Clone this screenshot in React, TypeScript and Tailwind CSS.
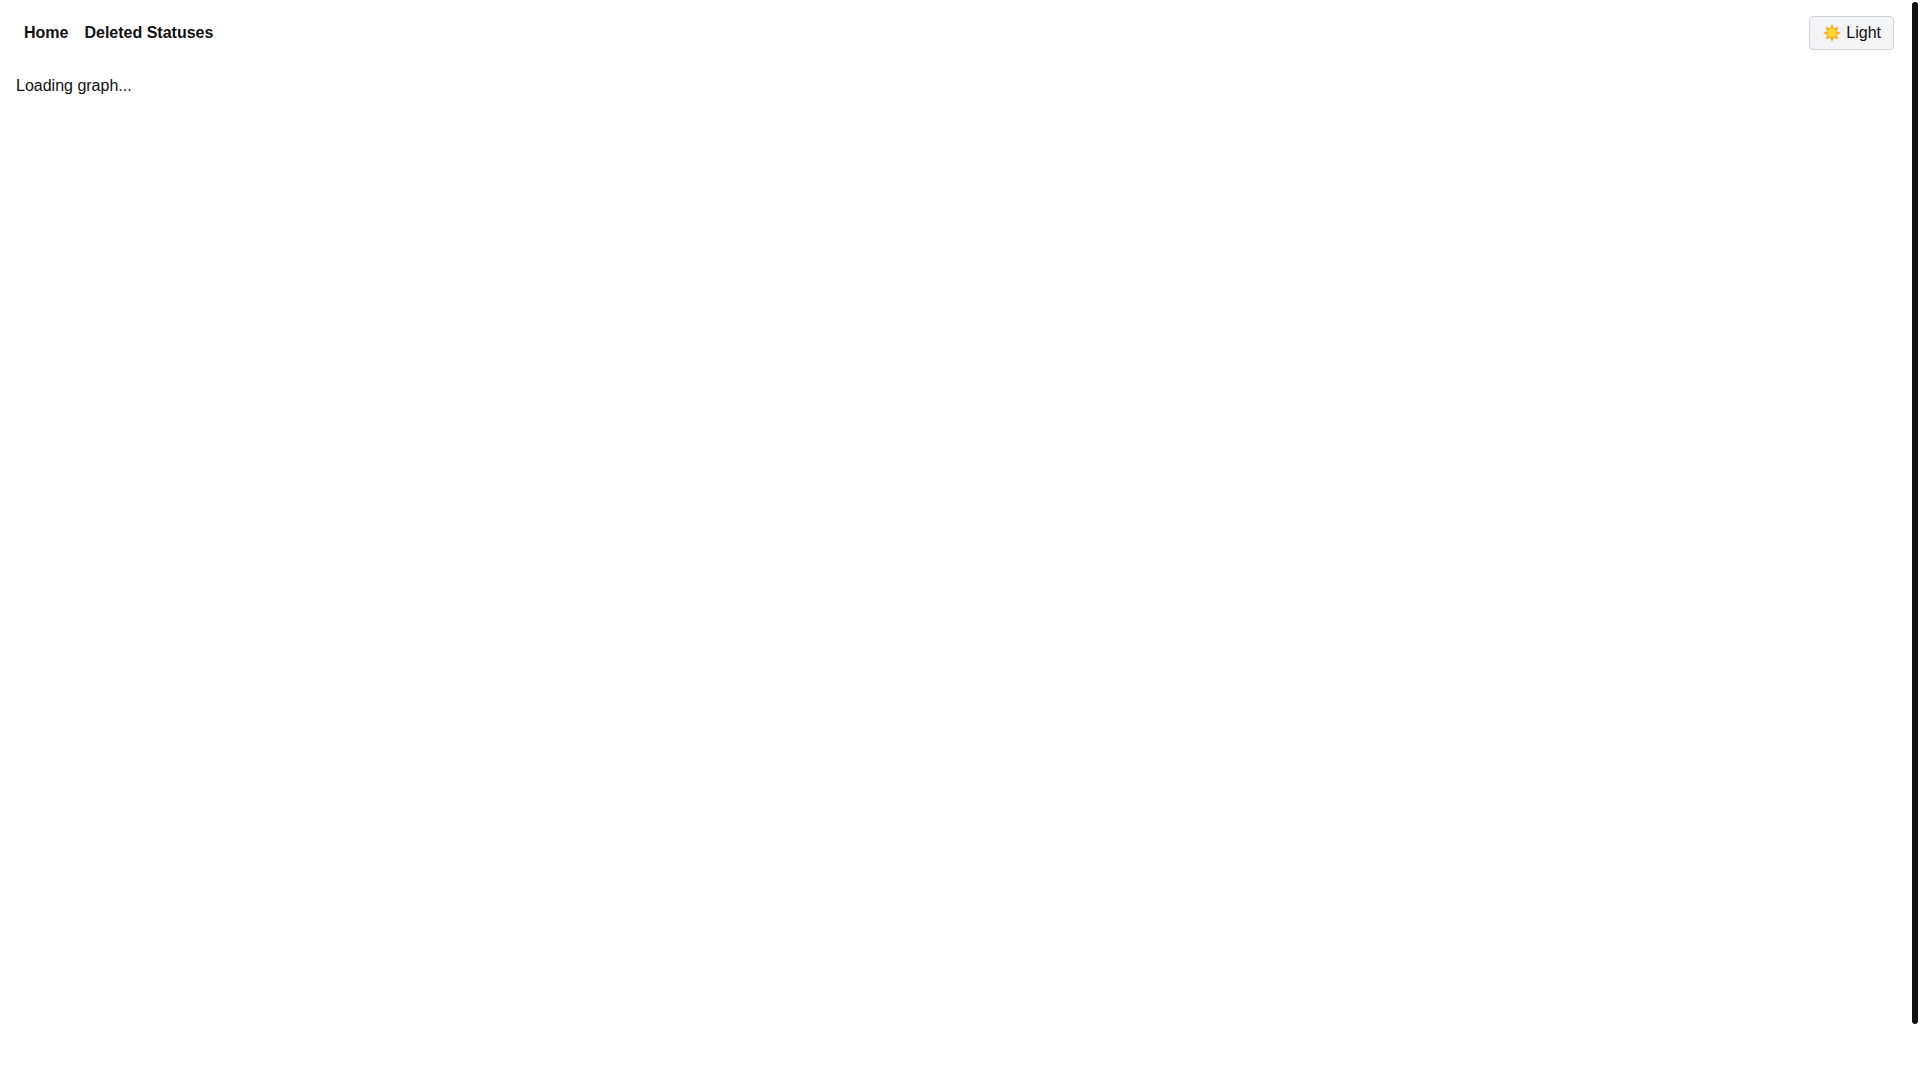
import { useState } from 'react';

const links = [
  { href: '/', label: 'Home' },
  { href: '/deleted', label: 'Deleted Statuses' },
];

const rays = [0, 45, 90, 135, 180, 225, 270, 315];

function SunIcon() {
  return (
    <svg viewBox="0 0 20 20" className="h-5 w-5" aria-hidden="true">
      <g fill="#fcab1c">
        {rays.map((angle) => (
          <path key={angle} d="M10 1 L12.2 6 H7.8 Z" transform={`rotate(${angle} 10 10)`} />
        ))}
      </g>
      <circle cx="10" cy="10" r="5.2" fill="#fdb924" />
      <circle cx="10" cy="10" r="4.4" fill="#ffdc2e" />
    </svg>
  );
}

function Navbar() {
  const [dark, setDark] = useState(false);

  return (
    <header className="flex items-center justify-between p-4">
      <nav className="flex">
        {links.map((link) => (
          <a key={link.href} href={link.href} className="px-2 font-bold">
            {link.label}
          </a>
        ))}
      </nav>
      <button
        type="button"
        onClick={() => setDark(!dark)}
        className="flex items-center gap-1 rounded border border-[#d1d5db] bg-[#f3f4f6] px-3 py-1"
      >
        {dark ? <span>🌙</span> : <SunIcon />}
        {dark ? 'Dark' : 'Light'}
      </button>
    </header>
  );
}

export default function App() {
  return (
    <div className="flex h-screen bg-white font-['Liberation_Sans',sans-serif] text-base text-[#111111]">
      <div className="flex-1">
        <Navbar />
        <main className="px-4 py-2">
          <p>Loading graph...</p>
        </main>
      </div>
      {/* scrollbar track with its thumb */}
      <div className="w-2.5 p-0.5">
        <div className="h-[95%] rounded-full bg-[#111111]" />
      </div>
    </div>
  );
}
